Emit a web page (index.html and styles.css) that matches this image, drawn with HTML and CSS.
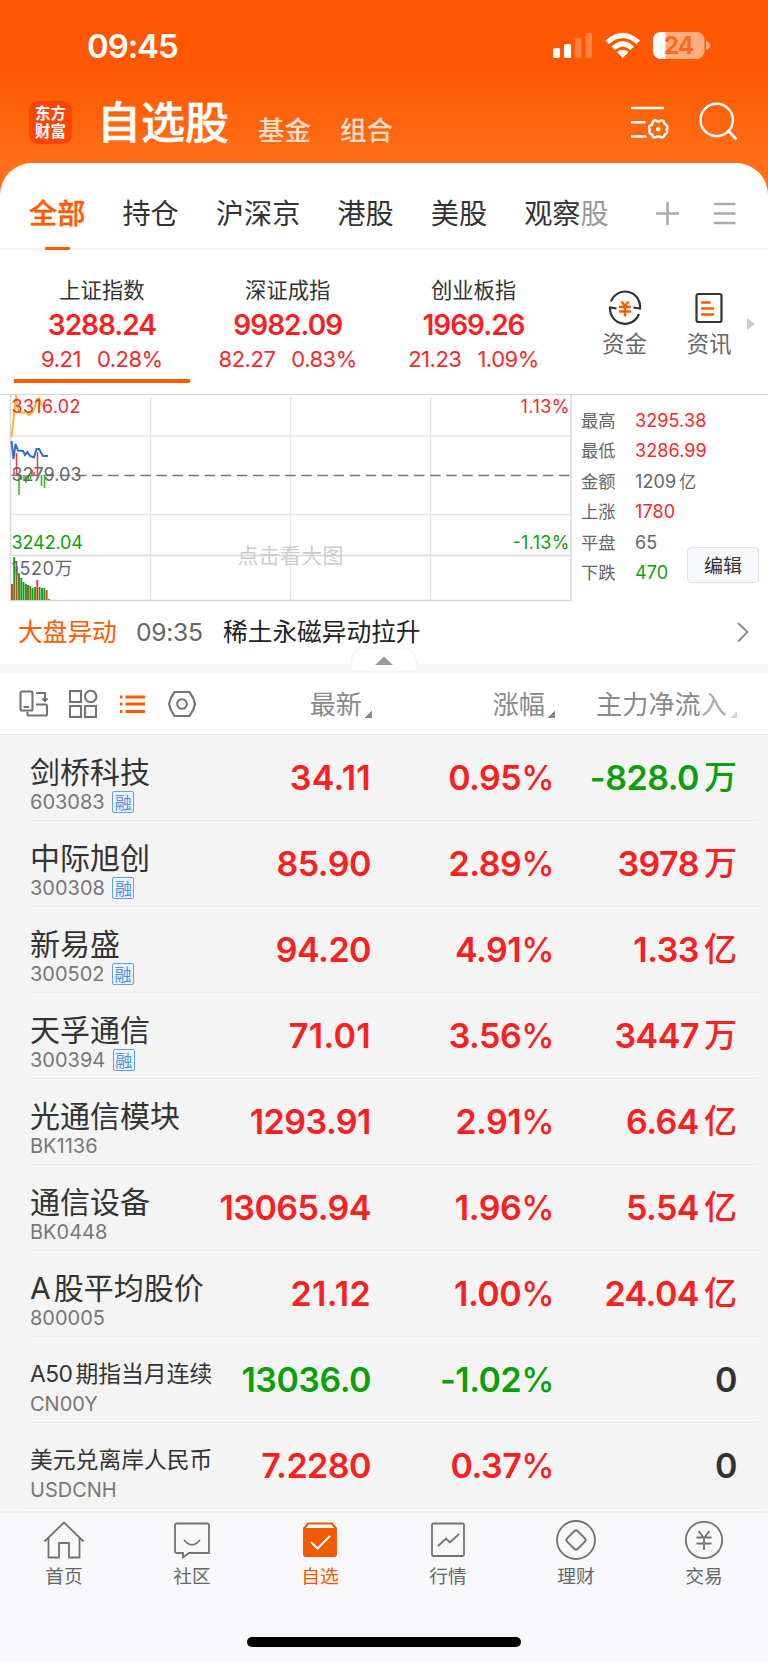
FILE: index.html
```html
<!DOCTYPE html>
<html lang="zh-CN">
<head>
<meta charset="utf-8">
<title>自选股</title>
<link rel="stylesheet" href="styles.css">
</head>
<body>
<div class="app">
  <header class="header">
    <div class="status">
      <span class="clock">09:45</span>
      <svg class="status-icons" width="160" height="30" viewBox="0 0 160 30" fill="#fff">
        <rect x="3" y="17" width="7" height="10" rx="1.8"/>
        <rect x="14" y="13" width="7" height="14" rx="1.8"/>
        <rect x="25" y="7" width="6.500" height="20" rx="1.8" opacity=".25"/>
        <rect x="35.500" y="2" width="6.500" height="25" rx="1.800" opacity=".25"/>
        <path d="M55.500 9.500Q72.500-6 90 9.500L86.500 13Q72.500 1 59 13Z"/>
        <path d="M61.500 15.500Q72.500 5 84 15.500L80.500 19Q72.500 12 65 19Z"/>
        <path d="M67 21Q72.500 16.500 78.500 21L72.800 27Z"/>
        <path d="M111 1H146.500a8 8 0 0 1 8 8V20a8 8 0 0 1-8 8H111a8 8 0 0 1-8-8V9a8 8 0 0 1 8-8Z" opacity=".5"/>
        <path d="M115.500 1V28H111a8 8 0 0 1-8-8V9a8 8 0 0 1 8-8Z"/>
        <path d="M156 10Q160 11 160 14.500T156 19Z" opacity=".5"/>
        <text class="battery-text" x="114" y="23" textLength="30">24</text>
      </svg>
    </div>
    <div class="titlebar">
      <div class="logo">东方财富</div>
      <h1 class="title">自选股</h1>
      <span class="subtitle">基金</span>
      <span class="subtitle">组合</span>
      <svg class="title-icons" width="112" height="44" viewBox="0 0 112 44" fill="none" stroke="#fff" stroke-width="2.400">
        <path d="M3 9H36M3 23.300H17.500M3 37.500H18.500"/>
        <path stroke-linejoin="round" d="M25.200 22Q27 20.700 28.800 22Q30.300 23.200 31.800 22Q33.600 20.700 35.500 22Q35.900 24.800 38.500 26.200Q40 28 39.200 29.800Q37.700 30.500 39.200 32Q39.500 34.500 36.600 35.700Q35.500 39 33.600 38.600Q30.300 36.500 27 38.600Q25 38.800 24.300 35.700Q20.800 34.500 21.200 32Q22.300 30.500 21.200 28.500Q20.800 26.500 24 25.500Z"/>
        <circle cx="30.300" cy="30.300" r="2.300" fill="#fff" stroke="none"/>
        <circle cx="88.700" cy="21" r="16.200"/>
        <path d="M99.500 31L108.500 40.500" stroke-width="2.800"/>
      </svg>
    </div>
  </header>

  <main class="sheet">
    <nav class="tabs">
      <span class="tab active">全部</span><span class="tab">持仓</span><span class="tab">沪深京</span><span class="tab">港股</span><span class="tab">美股</span><span class="tab">观察<span class="fade">股</span></span>
      <svg class="tab-icons" width="88" height="30" viewBox="0 0 88 30" fill="none" stroke="#aaa" stroke-width="2.600">
        <path d="M4 15.500H27M15.500 4V27M62 6H83.500M62 15.500H83.500M62 25H83.500"/>
      </svg>
    </nav>

    <section class="indices">
      <div class="index selected"><span class="index-name">上证指数</span><b>3288.24</b><span class="chg"><i>9.21</i><i>0.28%</i></span></div>
      <div class="index"><span class="index-name">深证成指</span><b>9982.09</b><span class="chg"><i>82.27</i><i>0.83%</i></span></div>
      <div class="index"><span class="index-name">创业板指</span><b>1969.26</b><span class="chg"><i>21.23</i><i>1.09%</i></span></div>
      <div class="shortcut">
        <svg width="36" height="36" viewBox="0 0 36 36" fill="none" stroke="#333" stroke-width="2.200">
          <path d="M4 11.500A15 15 0 0 1 33 18.500L26.500 17.500M32 24A15 15 0 0 1 3 17.500L9.500 18.500"/>
          <path stroke="#ff5a00" stroke-width="2.500" d="M14.500 11.500L18 16L21.500 11.500M12 17H24M12 21.500H24M18 16V26.500"/>
        </svg>
        <span>资金</span>
      </div>
      <div class="shortcut">
        <svg width="36" height="36" viewBox="0 0 36 36" fill="none" stroke="#333" stroke-width="2.200">
          <rect x="5.500" y="4" width="25" height="28" rx="2"/>
          <path stroke="#ff5a00" stroke-width="2.500" d="M10 12.500H19.500M10 18.500H23M10 24.500H23"/>
        </svg>
        <span>资讯</span>
      </div>
      <svg class="more" width="10" height="14" viewBox="0 0 10 14"><path d="M1 1L9 7L1 13Z" fill="#ccc"/></svg>
    </section>

    <section class="market">
      <svg class="chart" width="573" height="209" viewBox="0 393 573 209" fill="none">
        <g stroke="#e2e5ed" stroke-width="1.500">
          <path d="M150.500 397V600M290.500 397V600M430.500 397V600M10 436H571M10 514.500H571"/>
          <path stroke="#d5d8e0" d="M10.500 394V600.500H571V394M10 555.500H571"/>
        </g>
        <text class="hint" x="237.500" y="563" textLength="106">点击看大图</text>
        <path stroke="#777" stroke-width="1.400" stroke-dasharray="10.500 5.600" d="M11.500 475.500H571"/>
        <path stroke="#fdb62b" stroke-width="2" d="M11.500 437L15 406L16 395L18 409L21 413L26 412L29 415L33 412L36 403L37 399L39 398L41 404L44 407"/>
        <path stroke="#2f6fc1" stroke-width="2" d="M11.500 441L13.500 459L15.500 444L18 450.500L23 451L25 455L27.500 452L30 456L34 457.500L36.500 449L39 449L43 456L48 456"/>
        <path stroke="#ef3838" stroke-width="1.500" d="M16.500 453V475M37.500 452V475M14 471V475M32 470V475M34 472V475"/>
        <path stroke="#45b52d" stroke-width="1.600" d="M19 475V495M21.500 475V480M24 475V481M26 475V483M28.500 475V480M30.500 475V479M41.500 475V486M44.500 475V488"/>
        <g stroke="#16a216" stroke-width="1.900">
          <path d="M14.200 557V600M19 573V600M21.300 578V600M23.600 582V600M26 584V600M30.300 586V600M32.600 588V600M35 587V600M39.600 587V600M42 588V600M44.300 588V600"/>
          <path stroke="#f23030" d="M12 584V600M16.600 566V600M28 585V600M37.300 580V600M46.600 590V600M49 599V600"/>
        </g>
        <text class="red" x="11.500" y="413" textLength="69">3316.02</text>
        <text class="gray" x="11.500" y="481" textLength="70">3279.03</text>
        <text class="green" x="11.500" y="549" textLength="71.500">3242.04</text>
        <text class="gray" x="11.500" y="575" textLength="61">1520万</text>
        <text class="red" x="520.500" y="413" textLength="49">1.13%</text>
        <text class="green" x="512.500" y="549" textLength="57">-1.13%</text>
      </svg>
      <dl class="stats">
        <dt>最高</dt><dd class="red">3295.38</dd>
        <dt>最低</dt><dd class="red">3286.99</dd>
        <dt>金额</dt><dd>1209<span class="unit">亿</span></dd>
        <dt>上涨</dt><dd class="red">1780</dd>
        <dt>平盘</dt><dd>65</dd>
        <dt>下跌</dt><dd class="green">470</dd>
      </dl>
      <button class="edit">编辑</button>
    </section>

    <section class="news">
      <span class="news-tag">大盘异动</span><span class="news-time">09:35</span><span class="news-text">稀土永磁异动拉升</span>
      <svg width="14" height="24" viewBox="0 0 14 24" fill="none" stroke="#888" stroke-width="1.800"><path d="M3 3L12.500 12L3 21.500"/></svg>
    </section>
    <div class="strip">
      <svg class="handle" width="72" height="26" viewBox="0 0 72 26"><path d="M2 24L4.500 9Q6 2 13 2H58Q65 2 67 9L70 24Z" fill="#fff" stroke="#f0f1f4"/><path d="M27 18L36 9.500L45 18Z" fill="#999"/></svg>
    </div>

    <section class="columns">
      <svg class="view-icons" width="196" height="36" viewBox="0 0 196 36" fill="none" stroke="#737373" stroke-width="2.100">
        <rect x="5.500" y="6.500" width="12" height="19" rx="1.500"/><path d="M8.500 22H14M21 8H30V15M27.500 13.500L30 16L32.500 13.500M21 19.500H30.500Q32 19.500 32 21V29Q32 30.500 30.500 30.500H14Q12.500 30.500 12.500 29V27"/>
        <rect x="55" y="6" width="11" height="11"/><rect x="55" y="21" width="11" height="11"/><rect x="70" y="21" width="11" height="11"/><circle cx="75.700" cy="11.500" r="5.700"/>
        <path stroke="#ff5a00" stroke-width="2.800" d="M110.500 12H130M110.500 19H130M110.500 26.500H130M105 12H107.500M105 19H107.500M105 26.500H107.500"/>
        <path stroke-linejoin="round" d="M159.500 7H174.500Q179 13 180 19Q179 25 174.500 31H159.500Q155 25 154 19Q155 13 159.500 7Z"/><circle cx="167" cy="19" r="4.800"/>
      </svg>
      <span class="col c1">最新<i></i></span><span class="col c2">涨幅<i></i></span><span class="col c3">主力净流<em>入</em><i></i></span>
    </section>

    <section class="list">
      <div class="row"><div class="stock"><span class="name">剑桥科技</span><span class="code">603083<b>融</b></span></div><span class="v loose">34.11</span><span class="v">0.95<s>%</s></span><span class="v dn">-828.0<u>万</u></span></div>
      <div class="row"><div class="stock"><span class="name">中际旭创</span><span class="code">300308<b>融</b></span></div><span class="v">85.90</span><span class="v">2.89<s>%</s></span><span class="v">3978<u>万</u></span></div>
      <div class="row"><div class="stock"><span class="name">新易盛</span><span class="code">300502<b>融</b></span></div><span class="v">94.20</span><span class="v">4.91<s>%</s></span><span class="v">1.33<u>亿</u></span></div>
      <div class="row"><div class="stock"><span class="name">天孚通信</span><span class="code">300394<b>融</b></span></div><span class="v loose">71.01</span><span class="v">3.56<s>%</s></span><span class="v">3447<u>万</u></span></div>
      <div class="row"><div class="stock"><span class="name">光通信模块</span><span class="code">BK1136</span></div><span class="v">1293.91</span><span class="v">2.91<s>%</s></span><span class="v">6.64<u>亿</u></span></div>
      <div class="row"><div class="stock"><span class="name">通信设备</span><span class="code">BK0448</span></div><span class="v">13065.94</span><span class="v">1.96<s>%</s></span><span class="v">5.54<u>亿</u></span></div>
      <div class="row"><div class="stock"><span class="name"><span class="lat">A</span>股平均股价</span><span class="code">800005</span></div><span class="v loose">21.12</span><span class="v">1.00<s>%</s></span><span class="v">24.04<u>亿</u></span></div>
      <div class="row"><div class="stock"><span class="name small"><span class="lat">A50</span>期指当月连续</span><span class="code">CN00Y</span></div><span class="v dn">13036.0</span><span class="v dn">-1.02<s>%</s></span><span class="v zero">0</span></div>
      <div class="row"><div class="stock"><span class="name small">美元兑离岸人民币</span><span class="code">USDCNH</span></div><span class="v">7.2280</span><span class="v">0.37<s>%</s></span><span class="v zero">0</span></div>
    </section>
  </main>

  <footer class="bottom">
    <nav class="tabbar">
      <div class="item"><svg width="44" height="44" viewBox="0 0 44 44"><path d="M2.500 22.500L22 3.500L41.500 22.500M6.500 19V38.500H17V24H27V38.500H37.500V19"/></svg><span>首页</span></div>
      <div class="item"><svg width="44" height="44" viewBox="0 0 44 44"><path d="M7 4.500H37Q39 4.500 39 6.500V34H19L13 38.500V34H7Q5 34 5 32V6.500Q5 4.500 7 4.500ZM14 21Q22 30.500 30 21"/></svg><span>社区</span></div>
      <div class="item on"><svg width="44" height="44" viewBox="0 0 44 44"><path class="solid" d="M9.500 3.500H34.500L39 9V35Q39 38 36 38H8Q5 38 5 35V9Z"/><path class="lid" d="M10.500 5.500H33.500L36 9H8Z"/><path class="check" d="M13 23L19.500 29.500L32 17"/></svg><span>自选</span></div>
      <div class="item"><svg width="44" height="44" viewBox="0 0 44 44"><rect x="6" y="4.500" width="32" height="32.500" rx="1.500"/><path d="M12 27L20 19.500L24 23.500L33 15"/></svg><span>行情</span></div>
      <div class="item"><svg width="44" height="44" viewBox="0 0 44 44"><circle cx="22" cy="21" r="19"/><path d="M20.500 12Q22 10.500 23.500 12L31 19.500Q32.500 21 31 22.500L23.500 30Q22 31.500 20.500 30L13 22.500Q11.500 21 13 19.500Z"/></svg><span>理财</span></div>
      <div class="item"><svg width="44" height="44" viewBox="0 0 44 44"><circle cx="22" cy="21" r="18.200"/><path d="M16.500 12L22 19L27.500 12M14.500 18.500H29.500M14.500 24.500H29.500M22 18.500V31"/></svg><span>交易</span></div>
    </nav>
    <div class="home-indicator"></div>
  </footer>
</div>
</body>
</html>
```
FILE: styles.css
```css
* { box-sizing: border-box; }
body { margin: 0; width: 768px; font-family: Inter, "Noto Sans CJK SC", sans-serif; color: #333; }
svg { display: block; flex: none; }
i, em { font-style: normal; }
.app { width: 768px; height: 1662px; overflow: hidden; display: flex; flex-direction: column; background: #f8f8fb; }
.red { color: #f82828; fill: #f82828; }
.green { color: #0ba00b; fill: #0ba00b; }
.gray { color: #666; fill: #666; }

.header { height: 203px; flex: none; background: linear-gradient(#ff5800 0, #ff5800 70px, #ff6f18 163px); color: #fff; }
.status { height: 85px; display: flex; justify-content: space-between; padding: 31px 58px 0 87px; }
.clock { font-size: 33px; font-weight: 600; line-height: 30px; letter-spacing: -1.1px; }
.battery-text { font-size: 24px; font-weight: 700; fill: #ff6a1a; }
.titlebar { height: 78px; display: flex; padding: 0 28px 0 29px; }
.logo { width: 43px; height: 43px; margin-top: 16px; padding: 2px 5px; border-radius: 9px; background: #ff4406; font: 700 15.500px/18px "Noto Sans CJK SC", sans-serif; text-align: center; }
.title { margin: 3px 0 0 25px; width: 158px; font: 500 44px/64px "Noto Sans CJK SC", sans-serif; white-space: nowrap; -webkit-text-stroke: .5px #fff; }
.subtitle { margin: 26px 0 0 3px; width: 79px; font-size: 26.500px; line-height: 38px; font-weight: 500; color: rgba(255,255,255,.8); }
.title-icons { margin: 14px 0 0 auto; }

.sheet { margin-top: -40px; flex: none; background: #fff; border-radius: 32px 32px 0 0; display: flex; flex-direction: column; }
.tabs { height: 87px; display: flex; gap: 37px; padding: 30px 28px 0 29px; border-bottom: 2px solid #f5f5f6; font-size: 28.200px; line-height: 43px; white-space: nowrap; }
.tab.active { position: relative; color: #ff5a00; font-weight: 500; -webkit-text-stroke: .4px #ff5a00; }
.tab.active::after { content: ""; position: absolute; left: 16px; top: 54px; width: 25px; height: 3px; border-radius: 1px; background: #ff5a00; }
.fade { color: #999; }
.tab-icons { margin: 5px 0 0 auto; }

.indices { height: 144px; display: flex; padding-left: 9px; }
.index { width: 185.800px; display: flex; flex-direction: column; align-items: center; padding-top: 23px; border-bottom: 11px solid #fff; position: relative; }
.index.selected::after { content: ""; position: absolute; left: 5px; bottom: 0; width: 176px; height: 4px; background: #ff5a00; }
.index-name { font-size: 21.300px; line-height: 34px; }
.index b { font-size: 28px; line-height: 36px; font-weight: 600; letter-spacing: -1px; color: #f82020; }
.chg { display: flex; gap: 16px; font-size: 22px; line-height: 32px; color: #f82828; letter-spacing: -.5px; }
.shortcut { width: 84.500px; padding-top: 40px; display: flex; flex-direction: column; align-items: center; font-size: 22.300px; line-height: 36px; color: #666; }
.indices .shortcut:nth-of-type(4) { margin-left: 16px; }
.more { margin: 67px 0 0 -5px; }

.market { height: 208px; display: flex; position: relative; border-top: 1.500px solid #d5d8e0; }
.chart { font-size: 18px; margin-top: -2px; }
.hint { font-size: 21px; fill: #ccc; }
.stats { margin: 11px 0 0 8px; display: grid; grid-template-columns: 54px 110px; grid-auto-rows: 30.400px; line-height: 30.400px; font-size: 18px; color: #666; }
.stats dt { font-size: 17.300px; }
.stats dd { margin: 0; letter-spacing: .1px; }
.unit { margin-left: 3px; font-size: 17px; }
.edit { position: absolute; left: 687px; top: 152px; width: 72px; height: 36px; padding: 0; border: 1.500px solid #dfe1e8; border-radius: 4px; background: #f7f8fb; font: 19px/32px "Noto Sans CJK SC", sans-serif; color: #333; }

.news { height: 62px; display: flex; padding: 12px 19px 0 18px; font-size: 24.700px; line-height: 36px; white-space: nowrap; }
.news-tag { width: 118px; color: #ff5a00; }
.news-time { width: 87px; color: #666; letter-spacing: -.3px; }
.news-text { color: #222; }
.news svg { margin: 6px 0 0 auto; }
.strip { height: 9px; background: #f5f6fa; position: relative; }
.handle { position: absolute; left: 348px; top: -17px; }

.columns { height: 62px; display: flex; border-bottom: 1px solid #e9e9e9; font-size: 26.200px; line-height: 63px; color: #8a8a8a; }
.view-icons { margin: 12px 0 0 15px; }
.col { display: flex; justify-content: flex-end; }
.col em { color: #aaa; }
.col i { width: 7px; height: 7px; margin: 38px 0 0 3px; background: linear-gradient(135deg, transparent 50%, #888 50%); }
.c1 { width: 161px; }
.c2 { width: 183px; }
.c3 { width: 182px; }
.c3 i { opacity: .35; }

.list { background: #f4f4f4; }
.row { height: 86px; display: flex; position: relative; padding-left: 30px; }
.row::after { content: ""; position: absolute; left: 30px; right: 10px; bottom: 0; height: 1px; background: #eaeaea; }
.stock { width: 170px; display: flex; flex-direction: column; white-space: nowrap; padding-top: 17px; }
.name { font-size: 30px; line-height: 40px; color: #333; }
.small { font-size: 22.800px; }
.small .lat { letter-spacing: -.5px; }
.lat { margin-right: 3px; }
.code { display: flex; align-items: center; height: 22px; margin-top: -1px; font-size: 20px; line-height: 22px; color: #777; }
.code b { margin-left: 7.500px; width: 22px; height: 22px; border: 1.500px solid #63a0e5; border-radius: 2px; font: 400 17px/19px "Noto Sans CJK SC", sans-serif; text-align: center; color: #4a90e2; background: #edf4fc; }
.v { width: 182.500px; flex: none; text-align: right; font-size: 34px; font-weight: 600; line-height: 86px; color: #f82020; letter-spacing: -.5px; white-space: nowrap; }
.v:nth-child(2) { width: 171px; }
.v:nth-child(3) { width: 183.500px; }
.v.loose { letter-spacing: .3px; }
.v s { text-decoration: none; font-weight: 500; letter-spacing: 0; font-size: 33.500px; }
.v u { position: relative; top: -1px; text-decoration: none; font-weight: 500; font-size: 33px; line-height: 40px; margin-left: 5px; letter-spacing: 0; }
.v.dn { color: #0ba00b; }
.v.zero { color: #333; }

.bottom { flex: 1; margin-top: 2px; border-top: 2px solid #ededf0; background: #f8f8fb; }
.tabbar { display: flex; padding-top: 6px; }
.item { width: 128px; display: flex; flex-direction: column; align-items: center; font-size: 18.700px; line-height: 28px; color: #666; }
.item svg { fill: none; stroke: #737373; stroke-width: 1.800; }
.item.on { color: #f05a00; }
.item .solid { fill: #f05a00; stroke: none; }
.item .lid { fill: #fff; stroke: none; }
.item .check { stroke: #fff; stroke-width: 2; }
.home-indicator { width: 274px; height: 10px; margin: 46px auto 0 247px; border-radius: 5px; background: #000; }
```
